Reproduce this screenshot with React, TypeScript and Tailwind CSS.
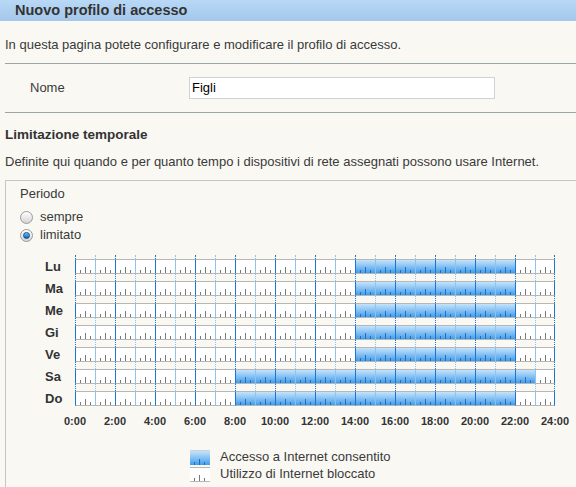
const days = ["Lu", "Ma", "Me", "Gi", "Ve", "Sa", "Do"];
const schedule: [number, number][] = [
  [14, 22],
  [14, 22],
  [14, 22],
  [14, 22],
  [14, 22],
  [8, 23],
  [8, 22],
];
const hours = Array.from({ length: 24 }, (_, i) => i);
const labels = Array.from({ length: 13 }, (_, i) => `${i * 2}:00`);

function Ticks({ on }: { on: boolean }) {
  const c = on ? "bg-[#1f6fc8]" : "bg-[#7a7a7a]";
  return (
    <div className="flex h-full items-end pl-[4px]">
      <div className={`w-px h-[3px] ${c}`} />
      <div className={`w-px h-[6px] ml-[4px] ${c}`} />
      <div className={`w-px h-[3px] ml-[4px] ${c}`} />
    </div>
  );
}

function Spacer({ h }: { h: string }) {
  return (
    <div className={`flex ${h}`}>
      {hours.map((hr) => (
        <div
          key={hr}
          className={`w-[20px] h-full border-l border-dotted ${
            hr % 2 === 0 ? "border-l-[#1c74d0]" : "border-l-[#8ec3ec]"
          } ${hr === 23 ? "border-r border-r-[#1c74d0]" : ""}`}
        />
      ))}
    </div>
  );
}

function DayRow({ range }: { range: [number, number] }) {
  return (
    <div className="flex h-[15px]">
      {hours.map((hr) => {
        const on = hr >= range[0] && hr < range[1];
        return (
          <div
            key={hr}
            className={`w-[20px] h-full border-y border-y-[#b6b6b6] border-l ${
              hr % 2 === 0 ? "border-l-[#1c74d0]" : "border-l-[#8ec3ec]"
            } ${hr === 23 ? "border-r border-r-[#1c74d0]" : ""} ${
              on ? "bg-linear-to-b from-[#c4e3fb] to-[#3d9de9]" : "bg-white"
            }`}
          >
            <Ticks on={on} />
          </div>
        );
      })}
    </div>
  );
}

function Radio({ checked }: { checked?: boolean }) {
  return (
    <div className="w-[13px] h-[13px] rounded-full border border-[#9a9a9a] bg-linear-to-b from-white to-[#d4d4d4] flex items-center justify-center">
      {checked && (
        <div className="w-[7px] h-[7px] rounded-full border border-[#0d4f8c] bg-linear-to-b from-[#6cc4f5] to-[#0b63b0]" />
      )}
    </div>
  );
}

export default function App() {
  return (
    <div
      className="w-[576px] h-[487px] overflow-hidden bg-[#f9f8f3] text-[#3a3a3a] text-[13px]"
      style={{ fontFamily: '"Liberation Sans", Arial, sans-serif' }}
    >
      <div className="h-[21px] bg-linear-to-b from-[#b8d8f6] to-[#a4c7ea] pl-[15px] flex items-center">
        <h1 className="text-[14.5px] font-bold text-[#333]">Nuovo profilo di accesso</h1>
      </div>

      <div className="pl-[5px]">
        <p className="mt-[15px] h-[18px] leading-[18px]">
          In questa pagina potete configurare e modificare il profilo di accesso.
        </p>
        <div className="mt-[9px] h-px bg-[#9aa5a5]" />

        <div className="mt-[13px] h-[22px] flex items-center">
          <span className="ml-[25px] w-[159px]">Nome</span>
          <div className="w-[306px] h-[22px] bg-white border border-[#ccd3d9] flex items-center pl-[2px] text-black">
            Figli
          </div>
        </div>
        <div className="mt-[13px] h-px bg-[#9aa5a5]" />

        <h2 className="mt-[13px] h-[18px] leading-[18px] text-[13.5px] font-bold text-[#333]">
          Limitazione temporale
        </h2>
        <p className="mt-[9px] h-[18px] leading-[18px]">
          Definite qui quando e per quanto tempo i dispositivi di rete assegnati possono usare Internet.
        </p>

        <div className="mt-[9px] border-l border-t border-[#c6c6c6] pl-[14px] pt-[5px] h-[400px]">
          <div className="h-[16px] leading-[16px]">Periodo</div>
          <div className="mt-[6px] h-[18px] flex items-center gap-[7px]">
            <Radio />
            <span>sempre</span>
          </div>
          <div className="h-[18px] flex items-center gap-[7px]">
            <Radio checked />
            <span>limitato</span>
          </div>

          <div className="mt-[11px] flex">
            <div className="ml-[25px] w-[30px] pt-[4px] flex flex-col gap-[7px]">
              {days.map((d) => (
                <div key={d} className="h-[15px] leading-[15px] text-[13px] font-bold text-[#333]">
                  {d}
                </div>
              ))}
            </div>
            <div className="flex flex-col">
              <Spacer h="h-[4px]" />
              {schedule.map((r, i) => (
                <div key={i}>
                  <DayRow range={r} />
                  {i < 6 && <Spacer h="h-[7px]" />}
                </div>
              ))}
            </div>
          </div>

          <div className="mt-[8px] ml-[35px] flex h-[14px]">
            {labels.map((l) => (
              <div key={l} className="w-[40px] text-center text-[11px] font-bold leading-[14px] text-[#333]">
                {l}
              </div>
            ))}
          </div>

          <div className="mt-[21px] ml-[170px] flex flex-col">
            <div className="flex items-center h-[16px]">
              <div className="w-[20px] h-[15px] border-t border-[#d0d0d0] bg-linear-to-b from-[#c4e3fb] to-[#3d9de9]">
                <Ticks on />
              </div>
              <span className="ml-[10px]">Accesso a Internet consentito</span>
            </div>
            <div className="flex items-center h-[16px] mt-px">
              <div className="w-[20px] h-[15px] border-y border-[#b6b6b6] bg-white">
                <Ticks on={false} />
              </div>
              <span className="ml-[10px]">Utilizzo di Internet bloccato</span>
            </div>
          </div>
        </div>
      </div>
    </div>
  );
}
